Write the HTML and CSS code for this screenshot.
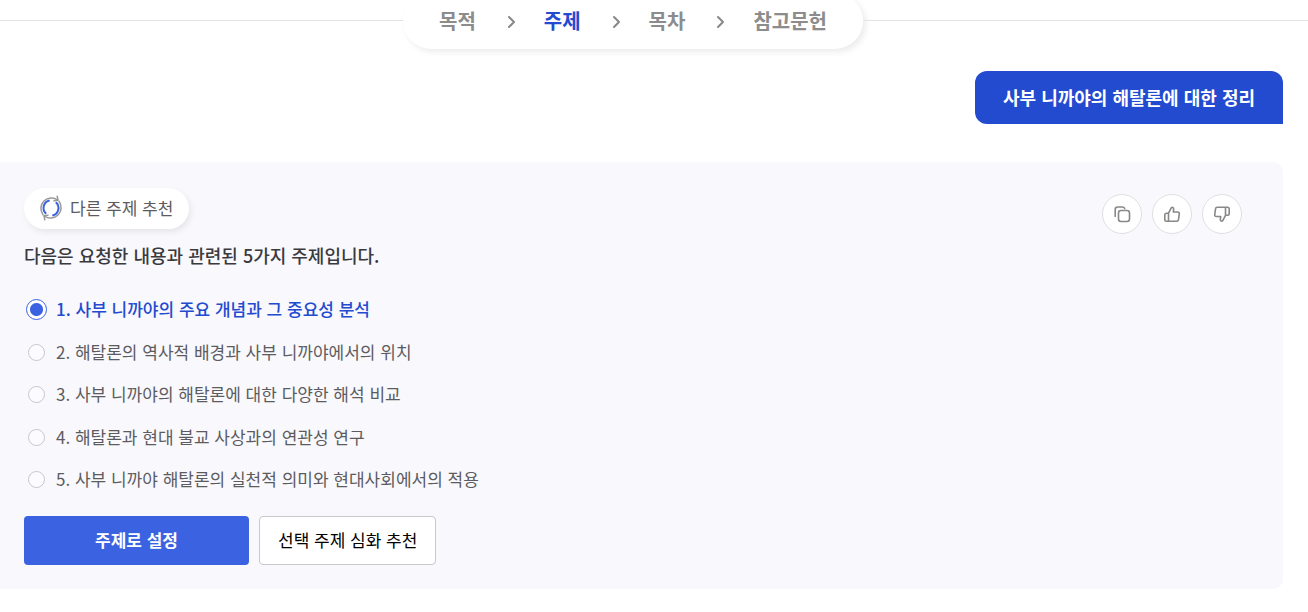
FILE: index.html
```html
<!DOCTYPE html>
<html lang="ko">
<head>
    <meta charset="UTF-8">
    <meta name="viewport" content="width=device-width, initial-scale=1">
    <title>주제 추천</title>
    <link rel="stylesheet" href="styles.css">
</head>
<body>
    <header class="steps-bar">
        <ol class="steps">
            <li>목적</li>
            <li class="arrow"><svg width="24" height="24" viewBox="0 0 24 24"><path d="M11 8l5 5-5 5"/></svg></li>
            <li class="on">주제</li>
            <li class="arrow"><svg width="24" height="24" viewBox="0 0 24 24"><path d="M11 8l5 5-5 5"/></svg></li>
            <li>목차</li>
            <li class="arrow"><svg width="24" height="24" viewBox="0 0 24 24"><path d="M11 8l5 5-5 5"/></svg></li>
            <li>참고문헌</li>
        </ol>
    </header>

    <main class="chat">
        <p class="question">사부 니까야의 해탈론에 대한 정리</p>

        <section class="answer">
            <div class="answer-top">
                <button class="refresh" type="button">
                    <svg width="26" height="26" viewBox="0 1 26 26">
                        <g class="outer">
                            <path d="M5 20.700A10.500 10.500 0 0 1 19.700 6"/>
                            <path d="M19.200 2.200l.8 4-4 .6"/>
                            <path d="M21 7.300A10.500 10.500 0 0 1 6.300 22"/>
                            <path d="M6.800 25.800l-.8-4 4-.6"/>
                        </g>
                        <g class="inner">
                            <path d="M8.200 19.700A7.500 7.500 0 0 1 11.700 6.600"/>
                            <path d="M17.800 8.300A7.500 7.500 0 0 1 14.300 21.400"/>
                        </g>
                    </svg>
                    다른 주제 추천
                </button>
                <div class="tools">
                    <button type="button" aria-label="복사">
                        <svg width="18" height="18" viewBox="0 0 18 18">
                            <rect x="5.500" y="5.500" width="11" height="11" rx="2.500"/>
                            <path d="M2.200 11.500V4.500a2.500 2.500 0 0 1 2.500-2.500H9.500a2.300 2.300 0 0 1 2.200 1.500"/>
                        </svg>
                    </button>
                    <button type="button" aria-label="좋아요">
                        <svg width="18" height="18" viewBox="0 0 18 18">
                            <path d="M5.500 16.200V8.200L8.400 2.600c1.300-.7 2.400.2 2.300 1.500L10.300 7h4.500a1.500 1.500 0 0 1 1.500 1.700l-.8 6a1.800 1.800 0 0 1-1.800 1.500H3.500a1.700 1.700 0 0 1-1.700-1.700V9.900a1.700 1.700 0 0 1 1.700-1.700h2"/>
                        </svg>
                    </button>
                    <button type="button" aria-label="싫어요">
                        <svg width="18" height="18" viewBox="0 0 18 18">
                            <path d="M12.500 2.300v8L9.600 15.900c-1.300.7-2.400-.2-2.300-1.500l.4-2.900H3.200a1.500 1.500 0 0 1-1.500-1.700l.8-6a1.800 1.800 0 0 1 1.800-1.500h10.200A1.700 1.700 0 0 1 16.200 4v4.600a1.700 1.700 0 0 1-1.700 1.700h-2"/>
                        </svg>
                    </button>
                </div>
            </div>

            <form>
                <h2>다음은 요청한 내용과 관련된 5가지 주제입니다.</h2>
                <div class="topics">
                    <label><input type="radio" name="topic" value="1" checked><span>1. 사부 니까야의 주요 개념과 그 중요성 분석</span></label>
                    <label><input type="radio" name="topic" value="2"><span>2. 해탈론의 역사적 배경과 사부 니까야에서의 위치</span></label>
                    <label><input type="radio" name="topic" value="3"><span>3. 사부 니까야의 해탈론에 대한 다양한 해석 비교</span></label>
                    <label><input type="radio" name="topic" value="4"><span>4. 해탈론과 현대 불교 사상과의 연관성 연구</span></label>
                    <label><input type="radio" name="topic" value="5"><span>5. 사부 니까야 해탈론의 실천적 의미와 현대사회에서의 적용</span></label>
                </div>
                <div class="actions">
                    <button class="primary" type="button">주제로 설정</button>
                    <button class="secondary" type="button">선택 주제 심화 추천</button>
                </div>
            </form>
        </section>
    </main>
</body>
</html>
```

FILE: styles.css
```css
* {
    box-sizing: border-box;
}
body {
    margin: 0;
    background: #fff;
    color: #3a3a3e;
    font-family: "Noto Sans CJK KR", sans-serif;
    font-size: 17px;
    line-height: 1.5;
}
button {
    font: inherit;
    cursor: pointer;
}
svg {
    display: block;
    fill: none;
    stroke: #888;
    stroke-linecap: round;
    stroke-linejoin: round;
}

/* steps */
.steps-bar {
    display: flex;
    align-items: flex-start;
}
.steps-bar::before,
.steps-bar::after {
    content: "";
    flex: 1 1 0;
    height: 1px;
    margin-top: 20px;
    background: #e4e4e4;
}
.steps-bar::after {
    flex-basis: 42px;
}
.steps {
    display: flex;
    align-items: center;
    gap: 22px;
    height: 56px;
    margin: -7px 0 0;
    padding: 0 36px;
    list-style: none;
    border-radius: 28px;
    background: #fff;
    box-shadow: 3px 3px 6px rgba(0,0,0,0.08);
    color: #8c8c8c;
    font-size: 20px;
    font-weight: bold;
}
.steps .on {
    color: #234bd0;
}
.arrow svg {
    stroke-width: 2;
}

/* chat */
.chat {
    display: flex;
    flex-direction: column;
    padding: 22px 25px 22px 0;
}
.question {
    align-self: flex-end;
    margin: 0 0 38px;
    padding: 13px 28px;
    border-radius: 12px 12px 0 12px;
    background: #234bd0;
    color: #fff;
    font-size: 18px;
    font-weight: bold;
}
.answer {
    padding: 26px 24px 24px;
    border-radius: 0 10px 10px 0;
    background: #f8f8fd;
}
.answer-top {
    display: flex;
    justify-content: space-between;
}
.refresh {
    display: flex;
    align-items: center;
    gap: 6px;
    height: 41px;
    padding: 0 16px 2px 14px;
    border: 0;
    border-radius: 21px;
    background: #fff;
    box-shadow: 2px 3px 6px rgba(0,0,0,0.08);
    color: #5c5c60;
}
.refresh .outer {
    stroke: #999;
    stroke-width: 1.5;
}
.refresh .inner {
    stroke: #3b62e0;
    stroke-width: 2;
    stroke-linecap: butt;
}
.tools {
    display: flex;
    gap: 10px;
    padding: 6px 17px 0 0;
}
.tools button {
    display: flex;
    align-items: center;
    justify-content: center;
    width: 40px;
    height: 40px;
    padding: 0;
    border: 1px solid #e0e0e4;
    border-radius: 50%;
    background: #fff;
}
.tools svg {
    stroke-width: 1.6;
}
h2 {
    margin: 0;
    padding: 8px 0 27px;
    font-size: 18px;
    font-weight: 500;
}
.topics {
    display: grid;
    gap: 17px;
    justify-items: start;
}
.topics label {
    display: flex;
    align-items: center;
    gap: 9px;
    padding-left: 2px;
    color: #5c5c60;
    cursor: pointer;
}
.topics input {
    appearance: none;
    width: 17px;
    height: 17px;
    margin: 2px 2px 0;
    border: 1px solid #c8c8cc;
    border-radius: 50%;
    background: #fcfcfe;
}
.topics input:checked {
    width: 21px;
    height: 21px;
    margin: 2px 0 0;
    border: 1px solid #3b62e0;
    background: radial-gradient(circle, #3b62e0 6px, #fff 7px);
}
.topics input:checked + span {
    color: #234bd0;
    font-weight: 500;
}
.actions {
    display: flex;
    gap: 10px;
    padding-top: 24px;
}
.actions button {
    height: 49px;
    border-radius: 4px;
}
.primary {
    width: 225px;
    border: 0;
    background: #3b62e0;
    color: #fff;
    font-weight: bold;
}
.secondary {
    padding: 0 18px;
    border: 1px solid #c8c8cc;
    background: #fff;
    color: #000;
}
```
